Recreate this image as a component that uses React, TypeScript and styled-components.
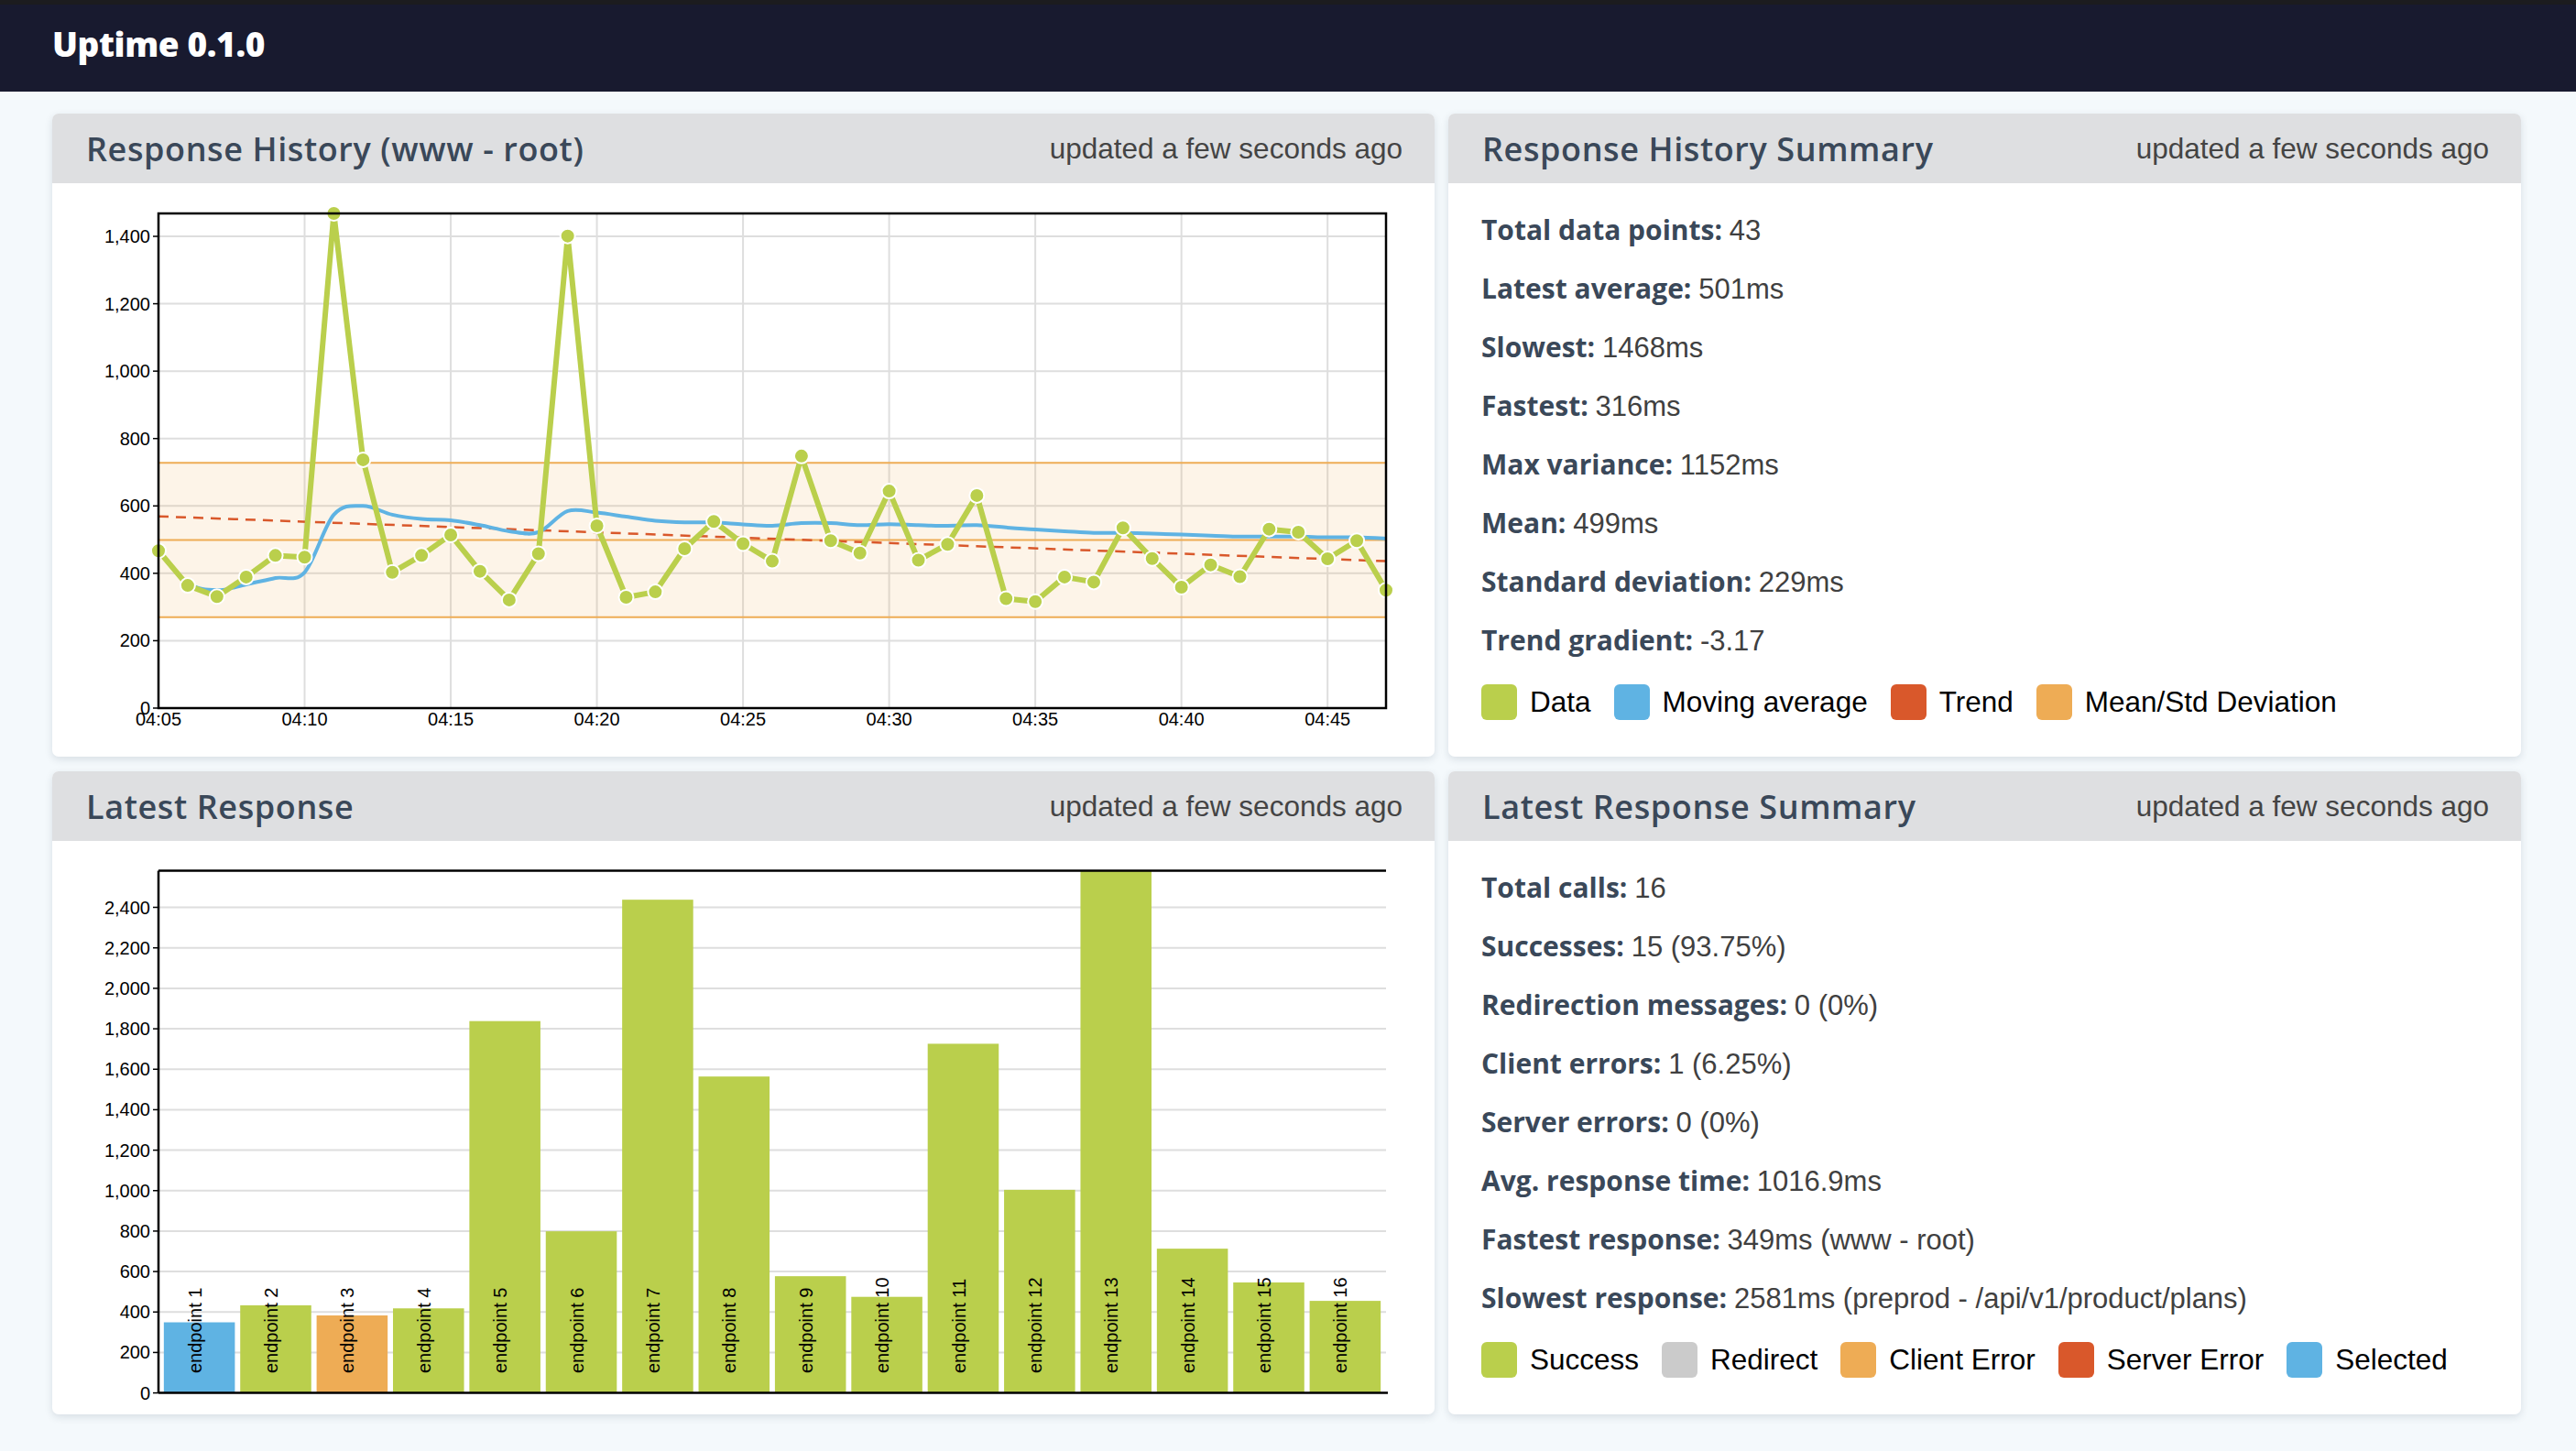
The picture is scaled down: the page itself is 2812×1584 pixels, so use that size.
import React from 'react';
import styled, { createGlobalStyle } from 'styled-components';

const GREEN = '#bacf4c';
const BLUE = '#5fb3e3';
const RED = '#d9582b';
const ORANGE = '#eeac55';
const GRAY = '#cbcbcb';

const GlobalStyle = createGlobalStyle`
  html, body { margin: 0; padding: 0; background: #f4f9fc; }
  body { font-family: "Open Sans", "Noto Sans", sans-serif; }
  * { box-sizing: border-box; }
`;

const Page = styled.div`
  width: 2812px;
  min-height: 1584px;
  background: #f4f9fc;
`;

const TopBar = styled.header`
  height: 100px;
  border-top: 5px solid #1c1c1f;
  background: #181a2f;
  display: flex;
  align-items: flex-start;
  padding: 23px 0 0 57px;
`;

const Brand = styled.h1`
  margin: 0;
  color: #ffffff;
  font-family: "Open Sans", sans-serif;
  font-weight: 800;
  font-size: 37px;
  line-height: 40px;
  letter-spacing: -0.4px;
`;

const Grid = styled.main`
  display: grid;
  grid-template-columns: 1509px 1171px;
  grid-template-rows: 702px 702px;
  column-gap: 15px;
  row-gap: 16px;
  padding: 24px 0 40px 57px;
`;

const Card = styled.section`
  background: #ffffff;
  border-radius: 7px;
  box-shadow: 0 3px 8px rgba(30, 45, 70, 0.13);
  display: flex;
  flex-direction: column;
  overflow: hidden;
`;

const CardHeader = styled.div`
  height: 76px;
  flex: none;
  background: #dedfe1;
  display: flex;
  align-items: center;
  justify-content: space-between;
  padding: 0 35px 0 37px;
`;

const CardTitle = styled.h2`
  margin: 0;
  font-family: "Open Sans", sans-serif;
  font-weight: 600;
  font-size: 36px;
  letter-spacing: 0.6px;
  color: #3a4859;
`;

const Updated = styled.span`
  font-family: "Liberation Sans", Arial, sans-serif;
  font-size: 31.5px;
  color: #444444;
`;

const CardBody = styled.div`
  flex: 1;
  position: relative;
`;

const ChartSvg = styled.svg`
  display: block;
`;

const AxisText = styled.text`
  font-family: "Liberation Sans", Arial, sans-serif;
  font-size: 20px;
  fill: #000000;
`;

const BarText = styled.text`
  font-family: "Liberation Sans", Arial, sans-serif;
  font-size: 20px;
  fill: #000000;
`;

const Summary = styled.div`
  padding: 19px 36px 0 36px;
  display: flex;
  flex-direction: column;
`;

const StatRow = styled.div`
  height: 64px;
  line-height: 64px;
  font-size: 30px;
  white-space: nowrap;
  font-family: "Open Sans", sans-serif;
`;

const StatLabel = styled.span`
  font-weight: 700;
  color: #3a4859;
`;

const StatValue = styled.span`
  font-family: "Liberation Sans", Arial, sans-serif;
  font-size: 31px;
  color: #404040;
`;

const Legend = styled.div`
  margin-top: 15px;
  height: 40px;
  display: flex;
  align-items: center;
  gap: 25px;
`;

const LegendItem = styled.div`
  display: flex;
  align-items: center;
  gap: 14px;
`;

const Swatch = styled.span<{ $color: string }>`
  width: 39px;
  height: 39px;
  border-radius: 6px;
  background: ${(p) => p.$color};
  flex: none;
`;

const LegendLabel = styled.span`
  font-family: "Liberation Sans", Arial, sans-serif;
  font-size: 31.5px;
  color: #000000;
`;

/* ---------- data ---------- */

const data = [
  467, 364, 331, 389, 453, 448, 1468, 737, 403, 453, 514, 406, 321, 458, 1401, 541, 329, 345, 473, 554, 488, 436,
  748, 497, 460, 644, 439, 486, 631, 325, 316, 389, 374, 535, 444, 359, 425, 390, 531, 522, 443, 497, 350,
];

const movingAvg = [
  467, 371, 350, 367, 386, 403, 574, 600, 574, 561, 557, 543, 525, 522, 585, 580, 568, 556, 551, 551, 545, 541,
  549, 549, 543, 546, 543, 541, 543, 536, 530, 525, 520, 520, 518, 515, 512, 509, 509, 509, 507, 507, 503,
];

const bars = [
  { v: 349, c: BLUE },
  { v: 433, c: GREEN },
  { v: 383, c: ORANGE },
  { v: 418, c: GREEN },
  { v: 1838, c: GREEN },
  { v: 799, c: GREEN },
  { v: 2438, c: GREEN },
  { v: 1564, c: GREEN },
  { v: 577, c: GREEN },
  { v: 475, c: GREEN },
  { v: 1726, c: GREEN },
  { v: 1004, c: GREEN },
  { v: 2581, c: GREEN },
  { v: 713, c: GREEN },
  { v: 546, c: GREEN },
  { v: 455, c: GREEN },
];

/* ---------- chart helpers ---------- */

const CW = 1509;
const CH = 626;
const L = 116;
const R = 1456;

function smoothPath(pts: [number, number][]) {
  let d = `M${pts[0][0].toFixed(1)},${pts[0][1].toFixed(1)}`;
  for (let i = 0; i < pts.length - 1; i++) {
    const p0 = pts[i - 1] || pts[i];
    const p1 = pts[i];
    const p2 = pts[i + 1];
    const p3 = pts[i + 2] || p2;
    const c1x = p1[0] + (p2[0] - p0[0]) / 6;
    const c1y = p1[1] + (p2[1] - p0[1]) / 6;
    const c2x = p2[0] - (p3[0] - p1[0]) / 6;
    const c2y = p2[1] - (p3[1] - p1[1]) / 6;
    d += ` C${c1x.toFixed(1)},${c1y.toFixed(1)} ${c2x.toFixed(1)},${c2y.toFixed(1)} ${p2[0].toFixed(1)},${p2[1].toFixed(1)}`;
  }
  return d;
}

const fmt = (n: number) => n.toLocaleString('en-US');

function HistoryChart() {
  const T = 33;
  const B = 573;
  const maxV = 1468;
  const xs = (i: number) => L + (i * (R - L)) / 42;
  const ys = (v: number) => B - (v * (B - T)) / maxV;
  const yTicks = [0, 200, 400, 600, 800, 1000, 1200, 1400];
  const xTicks = [0, 5, 10, 15, 20, 25, 30, 35, 40];
  const mean = 499;
  const sd = 229;
  const dataPts = data.map((v, i) => `${xs(i).toFixed(1)},${ys(v).toFixed(1)}`).join(' ');
  const maPath = smoothPath(movingAvg.map((v, i) => [xs(i), ys(v)] as [number, number]));
  return (
    <ChartSvg width={CW} height={CH} viewBox={`0 0 ${CW} ${CH}`}>
      {yTicks.slice(1).map((t) => (
        <line key={`gy${t}`} x1={L} x2={R} y1={ys(t)} y2={ys(t)} stroke="#dedede" strokeWidth={2} />
      ))}
      {xTicks.slice(1).map((t) => (
        <line key={`gx${t}`} x1={xs(t)} x2={xs(t)} y1={T} y2={B} stroke="#dedede" strokeWidth={2} />
      ))}
      <rect x={L} y={ys(mean + sd)} width={R - L} height={ys(mean - sd) - ys(mean + sd)} fill="rgba(240,172,80,0.13)" />
      {[mean + sd, mean, mean - sd].map((v) => (
        <line key={`b${v}`} x1={L} x2={R} y1={ys(v)} y2={ys(v)} stroke={ORANGE} strokeWidth={2} />
      ))}
      <line x1={xs(0)} y1={ys(569)} x2={xs(42)} y2={ys(436)} stroke={RED} strokeWidth={2.5} strokeDasharray="11 8" />
      <path d={maPath} fill="none" stroke={BLUE} strokeWidth={4} />
      <polyline points={dataPts} fill="none" stroke={GREEN} strokeWidth={6} strokeLinejoin="round" />
      {data.map((v, i) => (
        <circle key={`p${i}`} cx={xs(i)} cy={ys(v)} r={8} fill={GREEN} stroke="#ffffff" strokeWidth={2} />
      ))}
      <rect x={L} y={T} width={R - L} height={B - T} fill="none" stroke="#000" strokeWidth={2.5} />
      {yTicks.map((t) => (
        <g key={`ty${t}`}>
          <line x1={L - 6} x2={L} y1={ys(t)} y2={ys(t)} stroke="#000" strokeWidth={1.5} />
          <AxisText x={L - 9} y={ys(t)} dy="0.35em" textAnchor="end">
            {fmt(t)}
          </AxisText>
        </g>
      ))}
      {xTicks.map((t) => {
        const m = 5 + t;
        return (
          <AxisText key={`tx${t}`} x={xs(t)} y={B + 19} textAnchor="middle">
            {`04:${m < 10 ? '0' + m : m}`}
          </AxisText>
        );
      })}
    </ChartSvg>
  );
}

function LatestChart() {
  const T = 32.6;
  const B = 602.6;
  const maxV = 2581;
  const ys = (v: number) => B - (v * (B - T)) / maxV;
  const pad = 0.07;
  const step = (R - L) / (bars.length + pad);
  const bw = step * (1 - pad);
  const yTicks = [0, 200, 400, 600, 800, 1000, 1200, 1400, 1600, 1800, 2000, 2200, 2400];
  return (
    <ChartSvg width={CW} height={CH} viewBox={`0 0 ${CW} ${CH}`}>
      {yTicks.slice(1).map((t) => (
        <line key={`gy${t}`} x1={L} x2={R} y1={ys(t)} y2={ys(t)} stroke="#dedede" strokeWidth={2} />
      ))}
      {bars.map((b, i) => {
        const x = L + pad * step + i * step;
        const cx = x + bw / 2;
        return (
          <g key={`bar${i}`}>
            <rect x={x} y={ys(b.v)} width={bw} height={B - ys(b.v)} fill={b.c} />
            <BarText transform={`translate(${cx.toFixed(1)},${B - 21.6}) rotate(-90)`} dy="0.1em">
              {`endpoint ${i + 1}`}
            </BarText>
          </g>
        );
      })}
      <line x1={L} x2={R} y1={T} y2={T} stroke="#000" strokeWidth={2.5} />
      <line x1={L} x2={R + 2} y1={B} y2={B} stroke="#000" strokeWidth={2.5} />
      <line x1={L} x2={L} y1={T} y2={B} stroke="#000" strokeWidth={2.5} />
      {yTicks.map((t) => (
        <g key={`ty${t}`}>
          <line x1={L - 6} x2={L} y1={ys(t)} y2={ys(t)} stroke="#000" strokeWidth={1.5} />
          <AxisText x={L - 9} y={ys(t)} dy="0.35em" textAnchor="end">
            {fmt(t)}
          </AxisText>
        </g>
      ))}
    </ChartSvg>
  );
}

type Stat = [string, string];

const historyStats: Stat[] = [
  ['Total data points:', '43'],
  ['Latest average:', '501ms'],
  ['Slowest:', '1468ms'],
  ['Fastest:', '316ms'],
  ['Max variance:', '1152ms'],
  ['Mean:', '499ms'],
  ['Standard deviation:', '229ms'],
  ['Trend gradient:', '-3.17'],
];

const latestStats: Stat[] = [
  ['Total calls:', '16'],
  ['Successes:', '15 (93.75%)'],
  ['Redirection messages:', '0 (0%)'],
  ['Client errors:', '1 (6.25%)'],
  ['Server errors:', '0 (0%)'],
  ['Avg. response time:', '1016.9ms'],
  ['Fastest response:', '349ms (www - root)'],
  ['Slowest response:', '2581ms (preprod - /api/v1/product/plans)'],
];

function SummaryBlock({ stats, legend }: { stats: Stat[]; legend: [string, string][] }) {
  return (
    <Summary>
      {stats.map(([label, value]) => (
        <StatRow key={label}>
          <StatLabel>{label}</StatLabel> <StatValue>{value}</StatValue>
        </StatRow>
      ))}
      <Legend>
        {legend.map(([name, color]) => (
          <LegendItem key={name}>
            <Swatch $color={color} />
            <LegendLabel>{name}</LegendLabel>
          </LegendItem>
        ))}
      </Legend>
    </Summary>
  );
}

function Panel({ title, children }: { title: string; children: React.ReactNode }) {
  return (
    <Card>
      <CardHeader>
        <CardTitle>{title}</CardTitle>
        <Updated>updated a few seconds ago</Updated>
      </CardHeader>
      <CardBody>{children}</CardBody>
    </Card>
  );
}

export default function App() {
  return (
    <Page>
      <GlobalStyle />
      <TopBar>
        <Brand>Uptime 0.1.0</Brand>
      </TopBar>
      <Grid>
        <Panel title="Response History (www - root)">
          <HistoryChart />
        </Panel>
        <Panel title="Response History Summary">
          <SummaryBlock
            stats={historyStats}
            legend={[
              ['Data', GREEN],
              ['Moving average', BLUE],
              ['Trend', RED],
              ['Mean/Std Deviation', ORANGE],
            ]}
          />
        </Panel>
        <Panel title="Latest Response">
          <LatestChart />
        </Panel>
        <Panel title="Latest Response Summary">
          <SummaryBlock
            stats={latestStats}
            legend={[
              ['Success', GREEN],
              ['Redirect', GRAY],
              ['Client Error', ORANGE],
              ['Server Error', RED],
              ['Selected', BLUE],
            ]}
          />
        </Panel>
      </Grid>
    </Page>
  );
}
